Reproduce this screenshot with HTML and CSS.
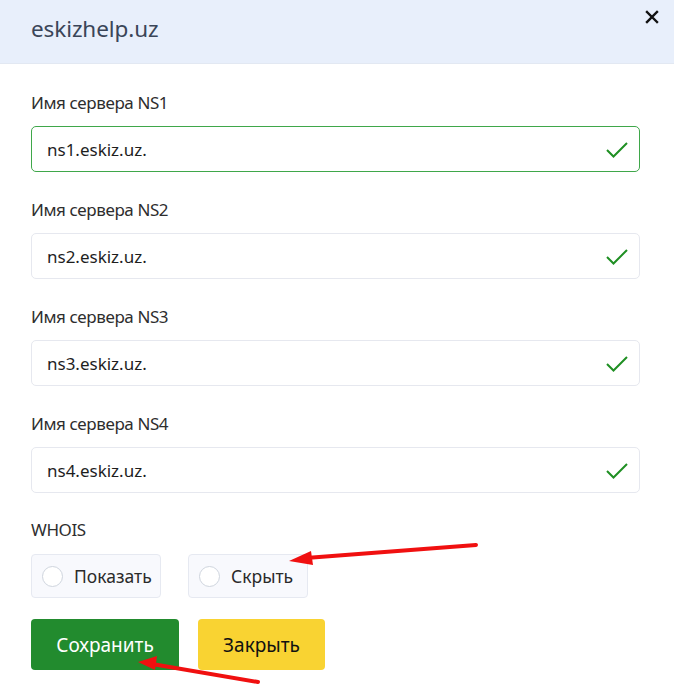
FILE: index.html
```html
<!DOCTYPE html>
<html lang="ru">
<head>
    <meta charset="UTF-8">
    <meta name="viewport" content="width=device-width, initial-scale=1.0">
    <title>eskizhelp.uz</title>
    <link rel="stylesheet" href="styles.css">
</head>
<body>

    <div class="modal">
        <div class="modal-header">
            <h2>eskizhelp.uz</h2>
            <button class="btn-close" aria-label="Закрыть">
                <svg width="14" height="14" viewBox="0 0 14 14"><path d="M2 2 L12 12 M12 2 L2 12" stroke="#111" stroke-width="2.4" stroke-linecap="square"/></svg>
            </button>
        </div>

        <div class="modal-body">
            <div class="form-group">
                <label>Имя сервера NS1</label>
                <div class="field valid active">
                    <span>ns1.eskiz.uz.</span>
                    <svg class="check" width="24" height="18" viewBox="0 0 24 18"><path d="M2 9 L8.5 15.5 L22 2" fill="none" stroke="#1f8f23" stroke-width="2"/></svg>
                </div>
            </div>
            <div class="form-group">
                <label>Имя сервера NS2</label>
                <div class="field valid">
                    <span>ns2.eskiz.uz.</span>
                    <svg class="check" width="24" height="18" viewBox="0 0 24 18"><path d="M2 9 L8.5 15.5 L22 2" fill="none" stroke="#1f8f23" stroke-width="2"/></svg>
                </div>
            </div>
            <div class="form-group">
                <label>Имя сервера NS3</label>
                <div class="field valid">
                    <span>ns3.eskiz.uz.</span>
                    <svg class="check" width="24" height="18" viewBox="0 0 24 18"><path d="M2 9 L8.5 15.5 L22 2" fill="none" stroke="#1f8f23" stroke-width="2"/></svg>
                </div>
            </div>
            <div class="form-group">
                <label>Имя сервера NS4</label>
                <div class="field valid">
                    <span>ns4.eskiz.uz.</span>
                    <svg class="check" width="24" height="18" viewBox="0 0 24 18"><path d="M2 9 L8.5 15.5 L22 2" fill="none" stroke="#1f8f23" stroke-width="2"/></svg>
                </div>
            </div>

            <div class="whois">
                <label>WHOIS</label>
                <div class="radios">
                    <div class="radio radio-show"><i></i>Показать</div>
                    <div class="radio radio-hide"><i></i>Скрыть</div>
                </div>
            </div>

            <div class="buttons">
                <button class="btn btn-save">Сохранить</button>
                <button class="btn btn-close-modal">Закрыть</button>
            </div>
        </div>

        <!-- annotation arrows -->
        <svg class="arrows" width="674" height="693" viewBox="0 0 674 693">
            <path d="M476 545 L306 558" stroke="#f01010" stroke-width="4" stroke-linecap="round"/>
            <polygon points="289,561 311,551 313,565" fill="#f01010"/>
            <path d="M258 682 L152 664" stroke="#f01010" stroke-width="4" stroke-linecap="round"/>
            <polygon points="138,662 157,656 155,670" fill="#f01010"/>
        </svg>
    </div>

</body>
</html>
```

FILE: styles.css
```css
body {
    margin: 0;
    font-family: "Noto Sans", "Open Sans", sans-serif;
    background-color: white;
    color: #2b2b2b;
}
.modal {
    position: relative;
    width: 674px;
    height: 693px;
    overflow: hidden;
}
.modal-header {
    height: 63px;
    background-color: #e8effb;
    border-bottom: 1px solid #e2e8f2;
    display: flex;
    justify-content: space-between;
    align-items: flex-start;
    padding-left: 31px;
}
.modal-header h2 {
    margin: 0;
    padding-top: 14px;
    font-size: 22.5px;
    line-height: 30px;
    font-weight: normal;
    color: #3a4558;
    letter-spacing: -0.1px;
}
.btn-close {
    border: none;
    background: none;
    padding: 0;
    margin: 10px 15px 0 0;
    width: 14px;
    height: 14px;
    cursor: pointer;
}
.modal-body {
    padding: 27px 34px 0 31px;
}
.form-group {
    margin-bottom: 26px;
}
.form-group label, .whois label {
    display: block;
    font-size: 17px;
    line-height: 24px;
    letter-spacing: -0.4px;
    margin-bottom: 11px;
    color: #2e2e2e;
}
.field {
    height: 44px;
    border: 1px solid #e6e8ef;
    border-radius: 5px;
    display: flex;
    align-items: center;
    justify-content: space-between;
    padding: 0 10px 0 15px;
    font-size: 17px;
    color: #1e1e1e;
}
.field.active {
    border-color: #3fa74a;
}
.check {
    margin-top: 2px;
}
.whois {
    margin-top: -1px;
}
.whois label {
    margin-bottom: 12px;
}
.radios {
    display: flex;
    gap: 27px;
}
.radio {
    height: 42px;
    border: 1px solid #e6e9f1;
    border-radius: 4px;
    background-color: #f8f9fd;
    display: flex;
    align-items: center;
    font-size: 17.5px;
    color: #2a2a2a;
}
.radio-show { width: 128px; }
.radio-hide { width: 118px; }
.radio i {
    display: block;
    width: 19px;
    height: 19px;
    border: 1px solid #cfd5de;
    border-radius: 50%;
    background-color: white;
    margin: 0 11px 0 10px;
}
.buttons {
    display: flex;
    gap: 19px;
    margin-top: 21px;
}
.btn {
    height: 51px;
    border: none;
    border-radius: 4px;
    font-family: inherit;
    font-size: 19px;
    cursor: pointer;
}
.btn-save {
    width: 148px;
    background-color: #228b2e;
    color: white;
}
.btn-close-modal {
    width: 127px;
    background-color: #f9d332;
    color: #111;
}
.arrows {
    position: absolute;
    left: 0;
    top: 0;
    pointer-events: none;
}
```
